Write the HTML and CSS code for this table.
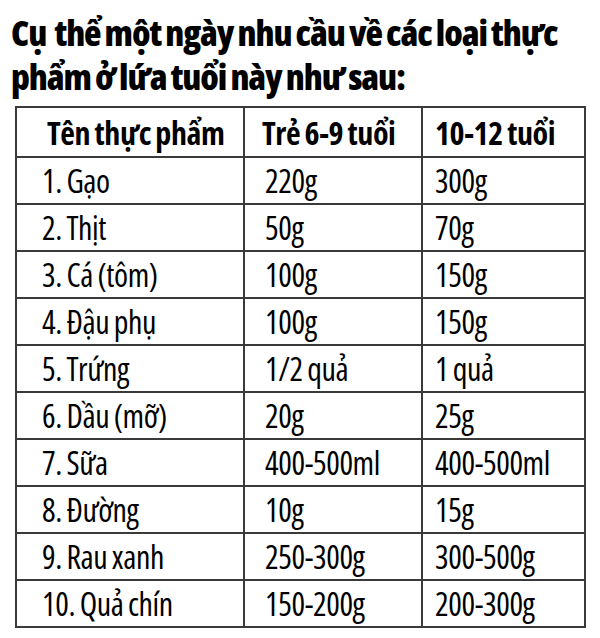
FILE: index.html
```html
<!DOCTYPE html>
<html lang="vi">
<head>
<meta charset="utf-8">
<link rel="stylesheet" href="styles.css">
</head>
<body>
<div class="page">
  <h1 class="title">Cụ&nbsp; thể một ngày nhu cầu về các loại thực phẩm ở lứa tuổi này như sau:</h1>
  <table class="food">
    <colgroup>
      <col class="c1"><col class="c2"><col class="c3">
    </colgroup>
    <thead>
      <tr><th class="h1">Tên thực phẩm</th><th class="h2">Trẻ 6-9 tuổi</th><th class="h3">10-12 tuổi</th></tr>
    </thead>
    <tbody>
      <tr><td>1. Gạo</td><td>220g</td><td>300g</td></tr>
      <tr><td>2. Thịt</td><td>50g</td><td>70g</td></tr>
      <tr><td>3. Cá (tôm)</td><td>100g</td><td>150g</td></tr>
      <tr><td>4. Đậu phụ</td><td>100g</td><td>150g</td></tr>
      <tr><td>5. Trứng</td><td>1/2 quả</td><td>1 quả</td></tr>
      <tr><td>6. Dầu (mỡ)</td><td>20g</td><td>25g</td></tr>
      <tr><td>7. Sữa</td><td>400-500ml</td><td>400-500ml</td></tr>
      <tr><td>8. Đường</td><td>10g</td><td>15g</td></tr>
      <tr><td>9. Rau xanh</td><td>250-300g</td><td>300-500g</td></tr>
      <tr><td>10. Quả chín</td><td>150-200g</td><td>200-300g</td></tr>
    </tbody>
  </table>
</div>
</body>
</html>
```

FILE: styles.css
```css
html, body {
  margin: 0;
  padding: 0;
  background: #ffffff;
}
.page {
  width: 600px;
  height: 638px;
  padding: 11px 0 0 11px;
  box-sizing: border-box;
  font-family: "Open Sans", "Liberation Sans", sans-serif;
  font-stretch: 75%;
  color: #000;
}
.title {
  margin: 0;
  width: 585px;
  font-size: 36px;
  font-weight: 800;
  line-height: 44px;
  letter-spacing: -1.1px;
  word-spacing: -1px;
}
.food {
  margin: 7px 0 0 4px;
  border-collapse: collapse;
  table-layout: fixed;
  width: 569px;
}
.c1 { width: 228px; }
.c2 { width: 178px; }
.c3 { width: 163px; }
.food th, .food td {
  border: 2px solid #3a3a3a;
  text-align: left;
  vertical-align: middle;
  padding: 0;
  white-space: nowrap;
}
.food th {
  height: 48px;
  font-size: 32px;
  font-weight: 700;
  letter-spacing: -0.4px;
  word-spacing: -1px;
}
.food td {
  height: 45px;
  font-size: 32px;
  font-weight: 400;
  letter-spacing: -0.4px;
  word-spacing: -1px;
}
.food th.h1 { padding-left: 30px; }
.food th.h2 { padding-left: 17px; }
.food th.h3 { padding-left: 12px; }
.food td:nth-child(1) { padding-left: 25px; }
.food td:nth-child(2) { padding-left: 20px; }
.food td:nth-child(3) { padding-left: 12px; }
```
